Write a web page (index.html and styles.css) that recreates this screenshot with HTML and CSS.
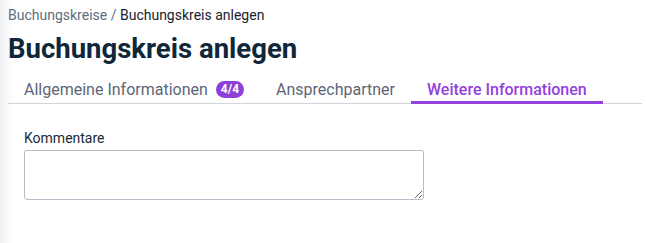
FILE: index.html
```html
<!DOCTYPE html>
<html lang="de">
<head>
<meta charset="utf-8">
<link rel="stylesheet" href="styles.css">
</head>
<body>
<div class="page">
  <nav class="crumbs"><span class="crumb-link">Buchungskreise</span> / <span class="crumb-current">Buchungskreis anlegen</span></nav>
  <h1 class="title">Buchungskreis anlegen</h1>
  <div class="tabs">
    <div class="tab">Allgemeine Informationen <span class="badge">4/4</span></div>
    <div class="tab">Ansprechpartner</div>
    <div class="tab active">Weitere Informationen</div>
  </div>
  <div class="form">
    <label class="label" for="k">Kommentare</label>
    <textarea id="k" class="area"></textarea>
  </div>
</div>
</body>
</html>
```
FILE: styles.css
```css
html, body { margin: 0; padding: 0; }
body {
  width: 646px; height: 243px;
  font-family: Roboto, "Noto Sans", sans-serif;
  background: linear-gradient(to right, #f0f1f3 0px, #fafafa 8px, #ffffff 16px);
}
.page { padding: 6px 4px 0 8px; }
.crumbs { font-size: 14px; line-height: 18px; color: #5d6e7e; }
.crumb-current { color: #17222d; }
.title { margin: 9px 0 0; font-size: 27.5px; font-weight: 700; line-height: 32px; color: #10273a; }
.tabs { display: flex; margin-top: 11px; border-bottom: 1px solid #d4d2dc; }
.tab {
  display: flex; align-items: center; gap: 8px;
  padding: 2px 16px 0; height: 28px; box-sizing: border-box;
  font-size: 16px; color: #5d6677; border-bottom: 3px solid transparent; margin-bottom: -1px;
}
.tab.active { color: #9340df; font-weight: 500; border-bottom-color: #9340df; }
.badge {
  background: #8d3fd8; color: #fff; font-size: 12px; font-weight: 700;
  border-radius: 9px; padding: 0 5px; height: 17px; line-height: 17px;
}
.form { padding: 26px 16px 0; display: flex; flex-direction: column; }
.label { font-size: 14px; color: #1a2a38; line-height: 16px; margin-bottom: 4px; }
.area {
  width: 400px; height: 50px; box-sizing: border-box; margin: 0;
  border: 1px solid #b3bec8; border-radius: 3px; resize: vertical; font-family: inherit;
}
```
